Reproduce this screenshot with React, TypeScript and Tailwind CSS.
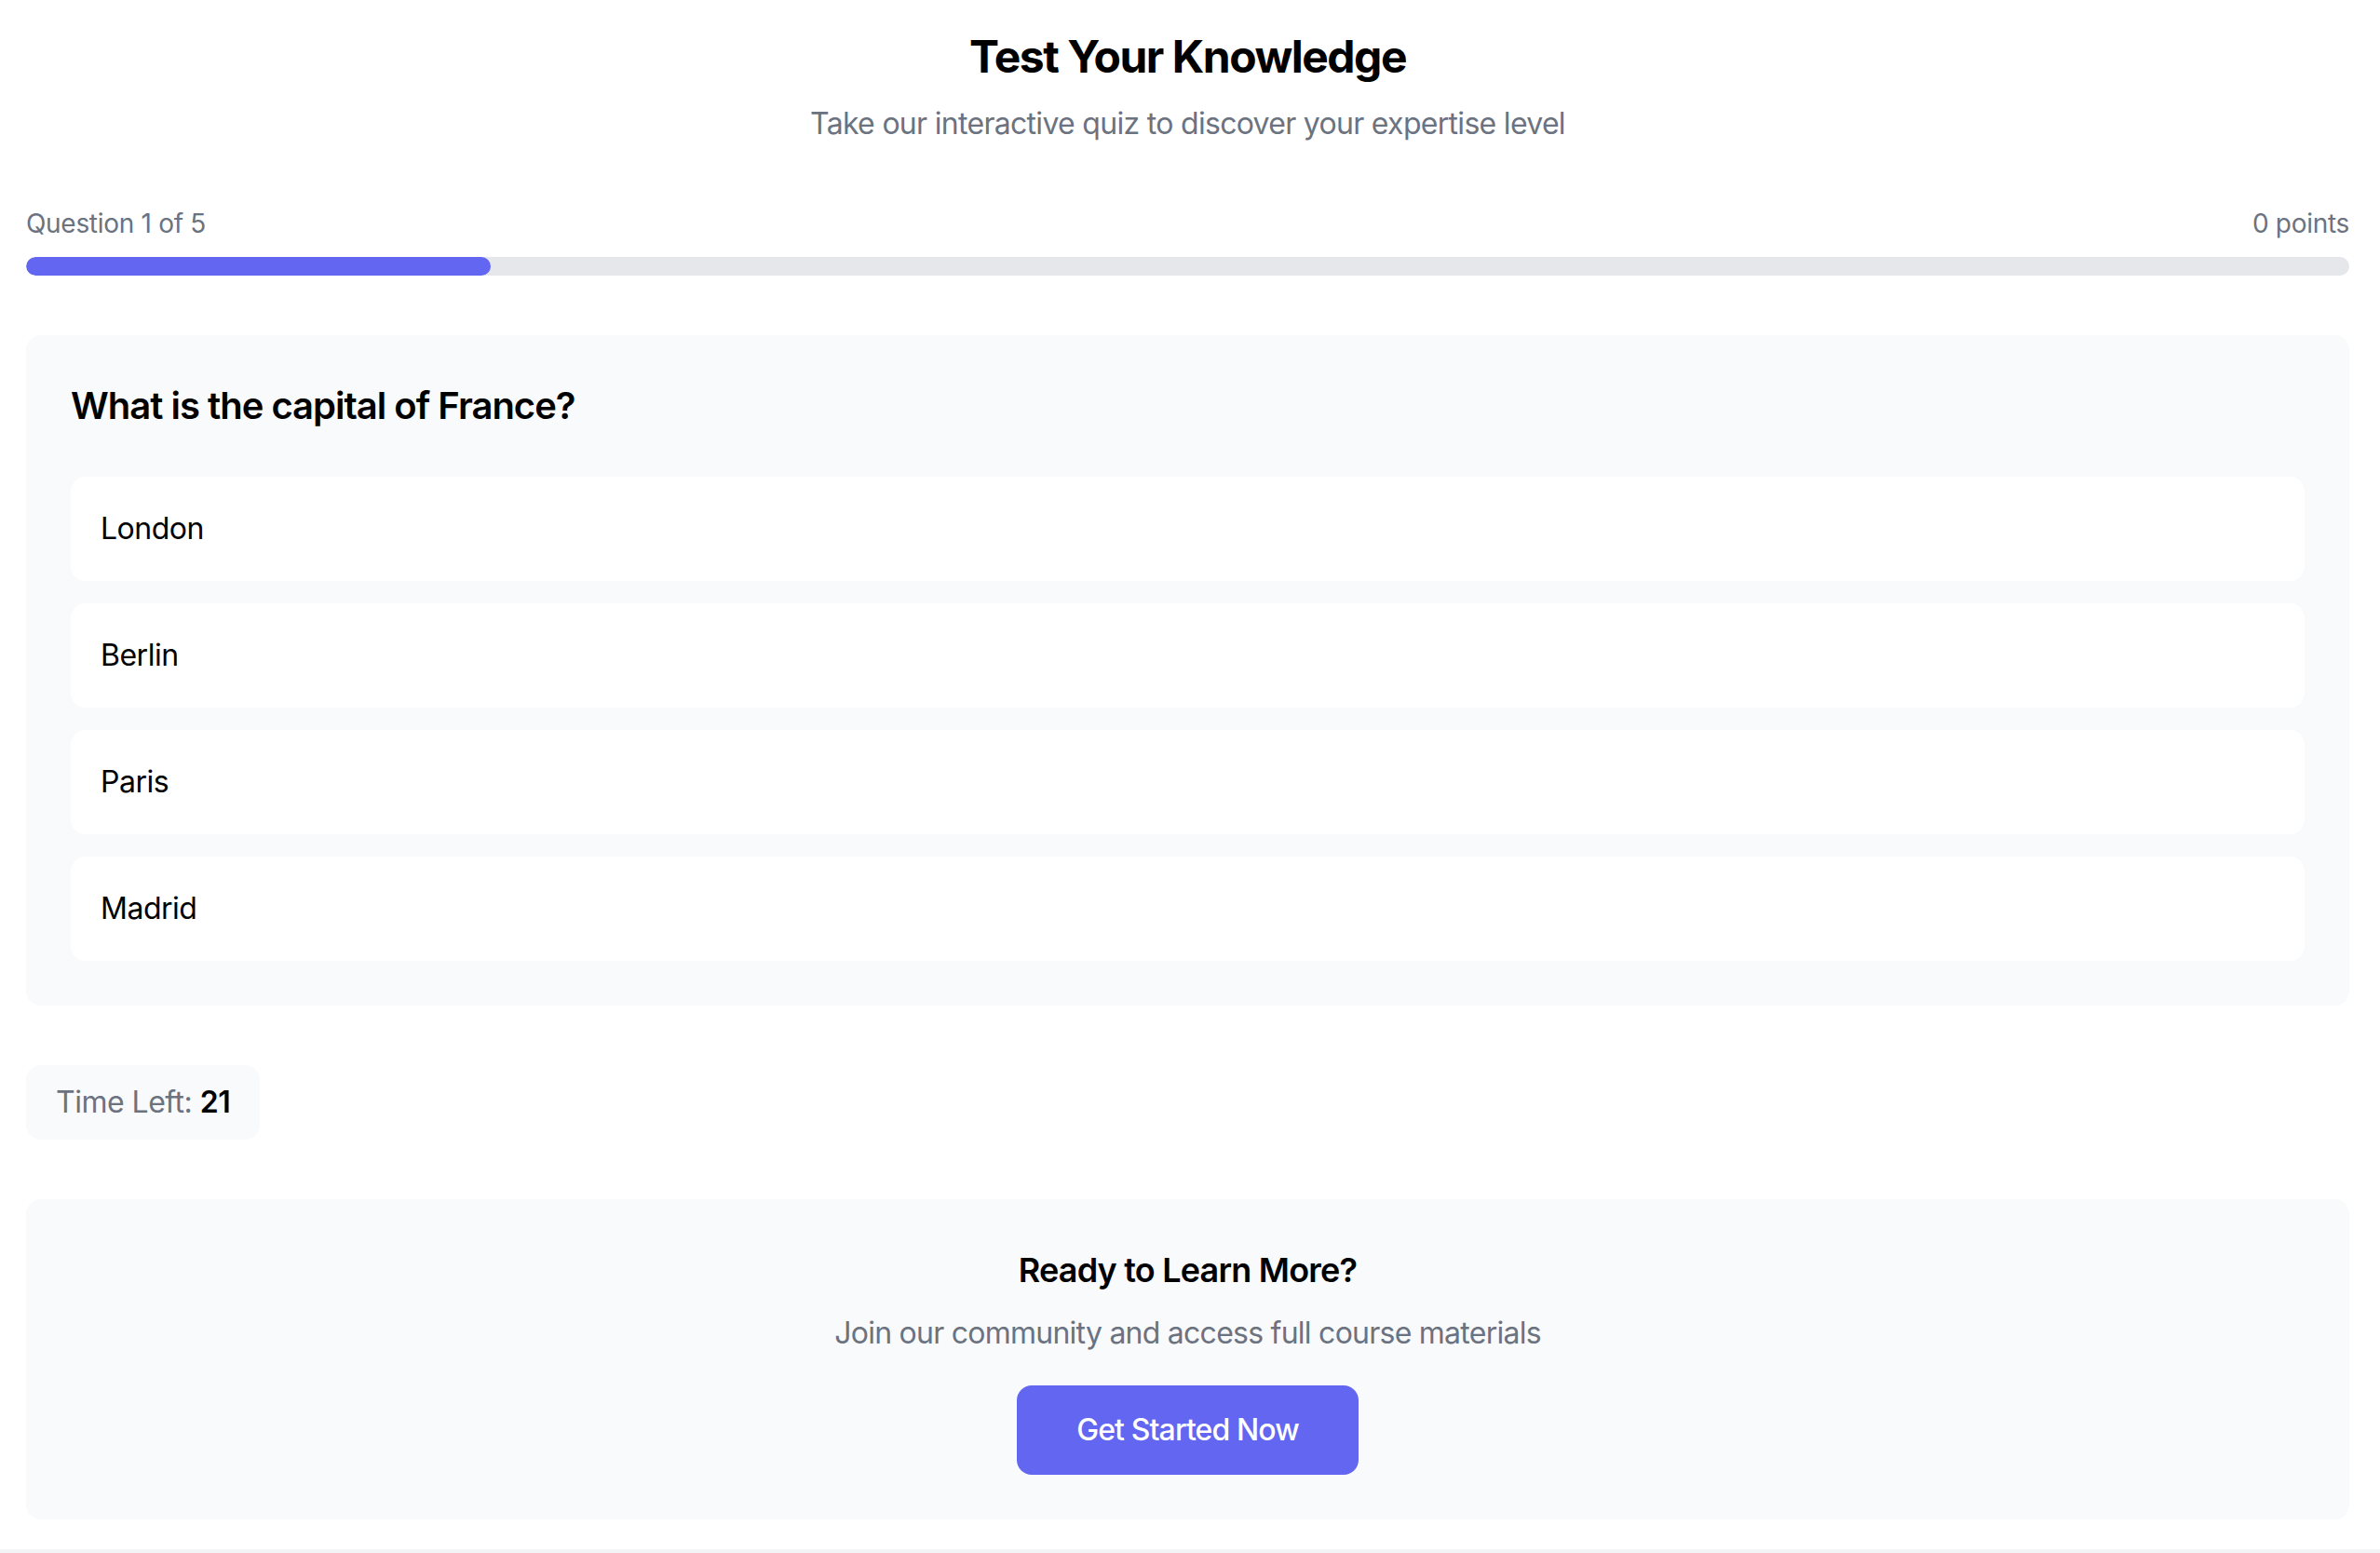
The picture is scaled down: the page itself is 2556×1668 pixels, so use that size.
const options = ['London', 'Berlin', 'Paris', 'Madrid'];

export default function App() {
  const current = 1;
  const total = 5;
  const progress = (current / total) * 100;

  return (
    <div
      className="h-screen overflow-hidden bg-white text-black"
      style={{ fontFamily: 'Inter, "Noto Sans", sans-serif' }}
    >
      <div className="pt-[29px] pl-[28px] pr-[33px]">
        {/* header */}
        <header className="text-center">
          <h1 className="mb-[16px] text-[48px] leading-[64px] font-bold tracking-[-1.5px]">Test Your Knowledge</h1>
          <p className="text-[32px] leading-[48px] text-[#6b7280] tracking-[-0.7px]">
            Take our interactive quiz to discover your expertise level
          </p>
        </header>

        {/* progress */}
        <div className="mt-[63px]">
          <div className="mb-[16px] flex items-center justify-between text-[28px] leading-[40px] text-[#6b7280] tracking-[-0.3px]">
            <span>Question {current} of {total}</span>
            <span>0 points</span>
          </div>
          <div className="h-[20px] w-full overflow-hidden rounded-full bg-[#e5e7eb]">
            <div className="h-full rounded-full bg-[#6366f1]" style={{ width: `${progress}%` }} />
          </div>
        </div>

        {/* question card */}
        <section className="mt-[64px] rounded-[16px] bg-[#f9fafb] p-[48px]">
          <h2 className="mb-[48px] text-[40px] leading-[56px] font-semibold tracking-[-1px]">
            What is the capital of France?
          </h2>
          <div className="flex flex-col gap-[24px]">
            {options.map((o) => (
              <button
                key={o}
                type="button"
                className="w-full rounded-[16px] bg-white px-[32px] py-[32px] text-left text-[32px] leading-[48px] tracking-[-0.5px]"
              >
                {o}
              </button>
            ))}
          </div>
        </section>

        {/* timer */}
        <div className="mt-[64px] inline-flex rounded-[16px] bg-[#f9fafb] px-[32px] py-[16px] text-[32px] leading-[48px] text-[#6b7280] tracking-[-0.5px]">
          <span>
            Time Left: <span className="font-semibold text-black">21</span>
          </span>
        </div>

        {/* CTA */}
        <section className="mt-[64px] rounded-[16px] bg-[#f9fafb] p-[48px] text-center">
          <h3 className="mb-[16px] text-[36px] leading-[56px] font-semibold tracking-[-0.8px]">Ready to Learn More?</h3>
          <p className="mb-[32px] text-[32px] leading-[48px] text-[#6b7280] tracking-[-0.75px]">
            Join our community and access full course materials
          </p>
          <button
            type="button"
            className="rounded-[16px] bg-[#6366f1] px-[64px] py-[24px] text-[32px] leading-[48px] font-medium text-white tracking-[-0.9px]"
          >
            Get Started Now
          </button>
        </section>
      </div>

      <div className="mt-[32px] h-[200px] bg-[#f3f4f6]" />
    </div>
  );
}
